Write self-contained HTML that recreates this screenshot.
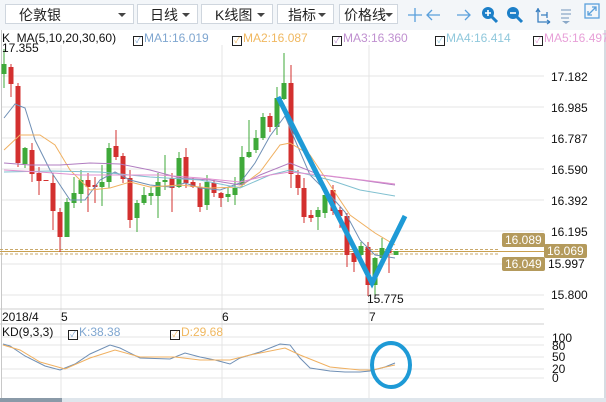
<!DOCTYPE html>
<html><head><meta charset="utf-8">
<style>
html,body{margin:0;padding:0;background:#fff;}
body{width:606px;height:402px;overflow:hidden;position:relative;font-family:"Liberation Sans","Noto Sans CJK SC",sans-serif;}
.tb{position:absolute;left:0;top:0;width:606px;height:30px;background:#f3f6f9;}
.box{position:absolute;top:4px;height:20px;border:1px solid #cfd6de;background:#fff;font-size:14px;line-height:20px;color:#222;box-sizing:border-box;}
.box span{position:absolute;top:0;}
.box i{position:absolute;right:7px;top:8px;width:0;height:0;border-left:4px solid transparent;border-right:4px solid transparent;border-top:4px solid #444;}
.t{position:absolute;font-size:12px;line-height:12px;white-space:nowrap;color:#111;}
.cb{display:inline-block;width:8px;height:8px;border:1px solid #222;margin-right:1px;vertical-align:-1px;position:relative;font-size:8px;line-height:8px;text-align:center;}
.lb{position:absolute;background:#b49a5c;color:#fff;font-size:12px;line-height:14px;padding:0 3px;border-radius:2px;}
</style></head><body>
<div class="tb">
 <div class="box" style="left:5px;width:129px"><span style="left:13px">伦敦银</span><i></i></div>
 <div class="box" style="left:137px;width:61px"><span style="left:12px">日线</span><i></i></div>
 <div class="box" style="left:201px;width:72px"><span style="left:13px">K线图</span><i></i></div>
 <div class="box" style="left:277px;width:57px"><span style="left:10px">指标</span><i></i></div>
 <div class="box" style="left:339px;width:59px"><span style="left:4px">价格线</span><i style="right:4px"></i></div>
 <svg style="position:absolute;left:400px;top:0" width="206" height="30" viewBox="400 0 206 30">
  <g stroke="#5aa0dc" stroke-width="1.3" fill="none">
   <path d="M408 15h14M415 8v14"/>
   <path d="M440 15h-13M432 10l-5 5 5 5"/>
   <path d="M457 15h13M465 10l5 5-5 5"/>
   <path d="M538 8v14h12M538 9l-2 3M538 9l2 3M550 22l-3-2M550 22l-3 2" stroke="#3a7fc0"/>
   <path d="M541 15h6M547 12v6" stroke="#3a7fc0"/>
   <path d="M561 10h10M561 14h10M561 18h8" stroke="#8aa8c8"/>
   <rect x="585" y="4" width="14" height="14" stroke="#5aa0dc"/>
   <path d="M588 15l8-8M592 7h4v4M588 11v4h4"/>
  </g>
  <circle cx="488" cy="13" r="6" fill="#1c7fc8"/><path d="M492 17l5 5" stroke="#1c7fc8" stroke-width="3"/><path d="M485 13h6M488 10v6" stroke="#fff" stroke-width="1.6"/>
  <circle cx="513" cy="13" r="6" fill="#1c7fc8"/><path d="M517 17l5 5" stroke="#1c7fc8" stroke-width="3"/><path d="M510 13h6" stroke="#fff" stroke-width="1.6"/>
  <path d="M562 21h8l-4 3z" fill="#8aa8c8"/>
 </svg>
</div>
<div style="position:absolute;left:604px;top:30px;width:2px;height:372px;background:#d6dce2"></div>
<div style="position:absolute;left:0;top:398px;width:606px;height:4px;background:#dfe6ec"></div>
<div style="position:absolute;left:0;top:398px;width:62px;height:4px;background:#8a9aa8"></div>

<svg id="ch" style="position:absolute;left:0;top:0" width="606" height="402">
 <g stroke="#e4e4e4" stroke-width="1">
  <path d="M2 76H544M2 107H544M2 138H544M2 169H544M2 200H544M2 231H544M2 264H544M2 295H544"/>
  <path d="M61 45V398M222 45V398M369 45V398"/>
  <path d="M2 337H544M2 345H544M2 357H544M2 369H544M2 378H544"/>
 </g>
 <path d="M0 309H544M0 324H544" stroke="#cfcfcf"/>
 <path d="M1.5 30V398" stroke="#c8c8c8"/>
 <path d="M0 249.5H500M0 254H500" stroke="#c9a86a" stroke-dasharray="3,2"/>
 <path d="M0 251.5H544" stroke="#c9a050"/>
 <g id="cs"></g>
 <g fill="none" stroke-width="1">
  <polyline stroke="#6f8fb5" points="4,118 15,104 25,108 35,140 50,170 70,200 85,200 100,180 115,172 130,180 150,185 170,187 185,183 200,188 220,190 240,183 255,163 270,136 285,116 295,140 310,175 330,195 345,212 360,240 375,255 395,258"/>
  <polyline stroke="#f0b060" points="4,150 20,135 40,135 55,145 70,170 90,190 110,188 130,182 150,187 180,185 210,188 240,187 260,172 280,145 290,143 310,155 330,185 350,215 375,233 395,245"/>
  <polyline stroke="#b07cc0" points="4,163 30,165 60,165 90,163 120,164 150,170 180,178 210,180 240,185 260,175 290,163 320,175 360,180 395,185"/>
  <polyline stroke="#80c0d0" points="4,172 50,171 100,172 150,177 200,180 240,188 270,175 290,170 330,180 360,190 395,196"/>
  <polyline stroke="#e090d0" points="4,170 40,172 80,175 120,175 160,175 200,178 240,182 270,175 290,172 330,176 395,184"/>
  <polyline stroke="#6f8fb5" points="3,344 10,346 25,356 45,366 60,370 75,364 90,354 110,345 120,348 140,358 170,359 185,353 200,357 215,360 230,364 240,358 260,352 280,344 290,345 300,358 310,368 330,371 345,372 360,372 370,371 385,367 395,363"/>
  <polyline stroke="#f0b060" points="3,345 20,350 40,362 65,369 90,358 115,350 140,357 175,357 200,360 230,360 250,355 285,348 300,355 330,367 360,370 372,370 395,365"/>
 </g>
 <polyline points="278,97 372,283 405,216" fill="none" stroke="#1e9ad6" stroke-width="5" stroke-linejoin="miter"/>
 <ellipse cx="391" cy="365" rx="19" ry="22" fill="none" stroke="#1e9ad6" stroke-width="4"/>
</svg>

<div class="t" style="left:2px;top:32px">K&nbsp; MA(5,10,20,30,60)</div>
<div class="t" style="left:2px;top:42px">17.355</div>
<div class="t" style="left:133px;top:32px;color:#7fa6d0"><span class="cb">✓</span>MA1:16.019</div>
<div class="t" style="left:232px;top:32px;color:#f0b860"><span class="cb">✓</span>MA2:16.087</div>
<div class="t" style="left:332px;top:32px;color:#c090d0"><span class="cb">✓</span>MA3:16.360</div>
<div class="t" style="left:435px;top:32px;color:#90c8dc"><span class="cb">✓</span>MA4:16.414</div>
<div class="t" style="left:533px;top:32px;color:#e8a0d8"><span class="cb">✓</span>MA5:16.497</div>

<div class="t" style="left:551px;top:71px">17.182</div>
<div class="t" style="left:551px;top:102px">16.985</div>
<div class="t" style="left:551px;top:133px">16.787</div>
<div class="t" style="left:551px;top:164px">16.590</div>
<div class="t" style="left:551px;top:195px">16.392</div>
<div class="t" style="left:551px;top:226px">16.195</div>
<div class="t" style="left:548px;top:258px">15.997</div>
<div class="t" style="left:551px;top:289px">15.800</div>
<div class="lb" style="left:502px;top:233px">16.089</div>
<div class="lb" style="left:544px;top:244px">16.069</div>
<div class="lb" style="left:502px;top:257px">16.049</div>
<div class="t" style="left:367px;top:293px">15.775</div>

<div class="t" style="left:2px;top:311px">2018/4</div>
<div class="t" style="left:61px;top:311px">5</div>
<div class="t" style="left:222px;top:311px">6</div>
<div class="t" style="left:369px;top:311px">7</div>
<div class="t" style="left:2px;top:326px">KD(9,3,3)</div>
<div class="t" style="left:68px;top:326px;color:#7fa6d0"><span class="cb">✓</span>K:38.38</div>
<div class="t" style="left:170px;top:326px;color:#f0b860"><span class="cb">✓</span>D:29.68</div>
<div class="t" style="left:552px;top:332px">100</div>
<div class="t" style="left:552px;top:340px">80</div>
<div class="t" style="left:552px;top:351px">50</div>
<div class="t" style="left:552px;top:363px">20</div>
<div class="t" style="left:552px;top:372px">0</div>

<script>
var c=[[4,'g',64,74,49,88],[11,'r',67,84,64,97],[18,'r',86,163,83,167],[25,'g',148,164,147,168],[32,'r',150,174,143,182],[39,'r',173,181,167,195],[46,'r',180,181,180,181],[53,'r',183,211,173,230],[60,'r',212,237,208,252],[67,'g',202,237,198,237],[74,'g',193,203,177,208],[81,'g',180,194,170,203],[88,'r',180,187,173,212],[95,'r',185,187,177,203],[102,'g',182,187,165,206],[109,'g',148,182,143,188],[116,'r',146,157,130,160],[123,'r',156,179,153,183],[130,'r',178,220,170,228],[137,'g',203,218,200,232],[144,'g',195,203,187,205],[151,'g',193,196,187,205],[158,'g',182,196,173,218],[165,'g',180,182,155,190],[172,'r',178,188,173,212],[179,'g',158,187,152,188],[186,'r',157,183,148,188],[193,'r',182,187,178,188],[200,'r',187,207,183,212],[207,'g',182,205,175,210],[214,'r',183,193,180,197],[221,'r',193,198,192,207],[228,'g',194,197,187,202],[235,'g',188,195,177,205],[242,'g',157,185,146,187],[249,'g',152,157,120,158],[256,'g',138,150,130,153],[263,'g',117,138,113,140],[270,'r',116,127,113,132],[277,'g',98,127,87,135],[284,'g',83,99,53,100],[291,'r',83,174,65,188],[298,'r',175,188,170,195],[304,'r',188,217,178,223],[311,'r',215,218,210,222],[318,'g',210,217,207,230],[325,'g',195,213,190,218],[333,'r',190,211,185,215],[340,'r',210,216,207,228],[347,'r',216,255,213,267],[354,'r',253,262,250,272],[361,'g',246,255,242,260],[368,'r',247,285,242,296],[375,'g',258,285,257,295],[382,'g',248,258,238,262],[389,'r',249,253,245,273],[396,'g',251,255,251,255]];
var s='';c.forEach(function(k){var col=k[1]=='g'?'#3fa93a':'#d3302f';s+='<line x1="'+k[0]+'" x2="'+k[0]+'" y1="'+k[4]+'" y2="'+k[5]+'" stroke="'+col+'"/>';s+='<rect x="'+(k[0]-2.5)+'" y="'+k[2]+'" width="5" height="'+Math.max(1,k[3]-k[2])+'" fill="'+col+'"/>';});
document.getElementById('cs').innerHTML=s;
</script>
</body></html>
